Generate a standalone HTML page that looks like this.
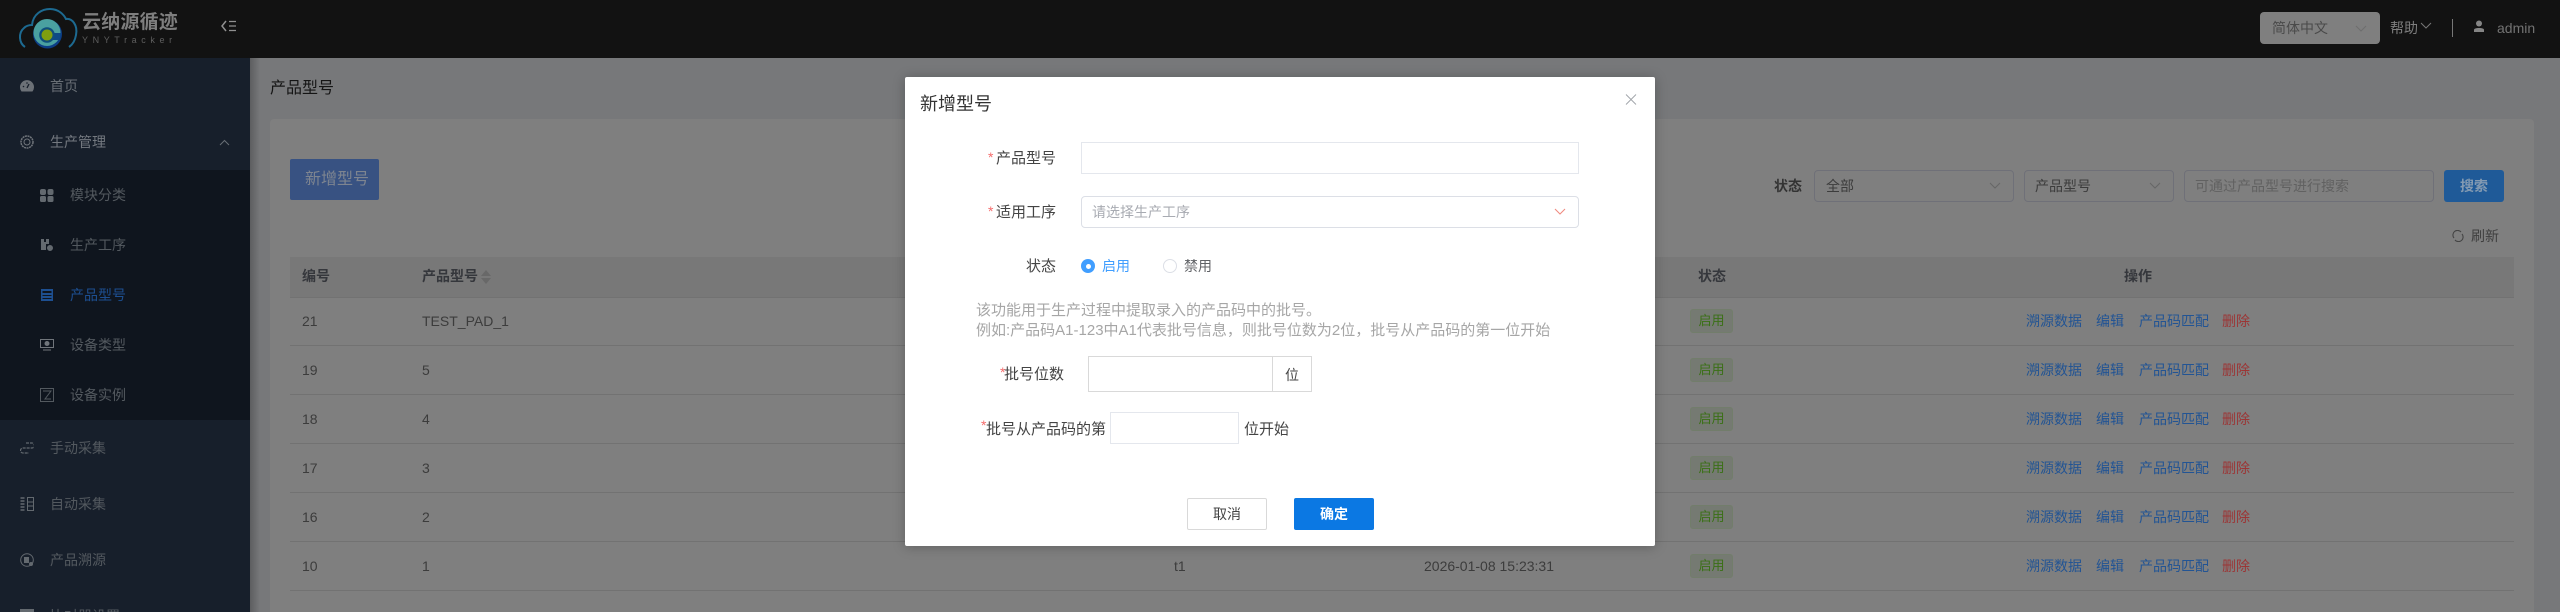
<!DOCTYPE html>
<html lang="zh-CN"><head><meta charset="utf-8"><title>产品型号</title>
<style>
html,body{margin:0;padding:0;width:2560px;height:612px;overflow:hidden;background:#77787a}
body{position:relative;font-family:"Liberation Sans","Noto Sans CJK SC",sans-serif;font-size:14px}
div,span,svg{position:absolute;box-sizing:border-box}
.t{line-height:20px;white-space:nowrap}
.m{color:#686e75}.s{color:#53595f}
.th{color:#35373c;font-weight:700;font-size:14px;top:266px}
.c{color:#3c3c3c}
.l{height:1px;left:290px;width:2224px;background:#727272}
.tag{left:1690px;width:43px;height:24px;border:1px solid #727d6b;border-radius:3px;background:#757a72;color:#3a7016;font-size:13px;line-height:22px;text-align:center}
.a{color:#225494}.d{color:#9c3535}
.box{background:#fff;border:1px solid #e4e7ed}
.sel{background:#7f7f7f;border:1px solid #6f7078;border-radius:4px;height:32px;top:170px}
.lab{color:#444;text-align:right;font-size:15px}
.f{color:#444;font-size:15px}
.req{color:#f56c6c}
</style></head><body>
<!-- header -->
<div style="left:0;top:0;width:2560px;height:58px;background:#121212"></div>
<svg style="left:18px;top:6px" width="62" height="44" viewBox="0 0 62 44"><path d="M7 41C1 37 0 27 6 22 9 19 12 19 14 19 15 8 24 3 32 3 41 3 46 9 48 13 54 12 60 19 58 29 57 35 54 39 51 41" fill="none" stroke="#1d6a91" stroke-width="2"/><circle cx="29.500" cy="28" r="14.500" fill="#0c3d86"/><circle cx="29" cy="26.500" r="13.500" fill="#4aa0a0"/><path d="M43 27H31v7H41.500" fill="#0d4a86"/><circle cx="29" cy="29" r="7.800" fill="#0f4f7d"/><circle cx="29" cy="29" r="5.500" fill="#7f9f10"/></svg>
<div class="t" style="left:82px;top:13px;color:#7e7e7e;font-size:19px;font-weight:700;letter-spacing:.2px">云纳源循迹</div>
<div class="t" style="left:82px;top:30px;color:#5e5e5e;font-size:9px;letter-spacing:4.600px">YNYTracker</div>
<svg style="left:221px;top:20px" width="16" height="12" viewBox="0 0 16 12"><path d="M5 1 1 6l4 5" fill="none" stroke="#909090" stroke-width="1.500"/><path d="M8 1.500h7M8 6h7M8 10.500h7" stroke="#909090" stroke-width="1.300"/></svg>
<div style="left:2260px;top:12px;width:120px;height:32px;background:#7f7f7f;border-radius:4px"></div>
<div class="t" style="left:2272px;top:18px;color:#4a4a4a">简体中文</div>
<svg style="left:2355px;top:25px" width="12" height="8" viewBox="0 0 12 8"><path d="M1 1l5 5 5-5" fill="none" stroke="#6e6e6e"/></svg>
<div class="t" style="left:2390px;top:18px;color:#7e7e7e">帮助</div>
<svg style="left:2420px;top:22px" width="12" height="8" viewBox="0 0 12 8"><path d="M1 1l5 5 5-5" fill="none" stroke="#777"/></svg>
<div style="left:2452px;top:19px;width:1px;height:18px;background:#777"></div>
<svg style="left:2473px;top:20px" width="12" height="13" viewBox="0 0 12 13"><circle cx="6" cy="3.500" r="3" fill="#858585"/><path d="M1 12V10C1 8.500 3 8 6 8s5 .5 5 2v2z" fill="#858585"/></svg>
<div class="t" style="left:2497px;top:18px;color:#727272;font-size:14px">admin</div>
<!-- sidebar -->
<div style="left:0;top:58px;width:250px;height:554px;background:#171f2b"></div>
<div style="left:0;top:170px;width:250px;height:250px;background:#0f151e"></div>
<div style="left:250px;top:58px;width:10px;height:554px;background:linear-gradient(90deg,#5d5e60,#77787a)"></div>
<svg style="left:20px;top:80px" width="14" height="12" viewBox="0 0 14 12"><path d="M1.500 11.500A7 7 0 1 1 12.500 11.500z" fill="#6c7177"/><path d="M7 8 9 4" stroke="#171f2b" stroke-width="1.300"/><circle cx="3.500" cy="6.500" r=".8" fill="#171f2b"/><circle cx="7" cy="3" r=".8" fill="#171f2b"/></svg>
<div class="t m" style="left:50px;top:76px">首页</div>
<svg style="left:20px;top:135px" width="14" height="14" viewBox="0 0 14 14"><circle cx="7" cy="7" r="6" fill="none" stroke="#70757b" stroke-width="1.500" stroke-dasharray="2 .6"/><circle cx="7" cy="7" r="3" fill="none" stroke="#70757b"/></svg>
<div class="t" style="left:50px;top:132px;color:#747980">生产管理</div>
<svg style="left:219px;top:139px" width="11" height="7" viewBox="0 0 11 7"><path d="M1 6l4.500-4.500L10 6" fill="none" stroke="#686e75"/></svg>
<svg style="left:40px;top:189px" width="14" height="13" viewBox="0 0 14 13"><g fill="#63696f"><rect x="0" y="0" width="6" height="6" rx="2"/><rect x="7.500" y="0" width="6" height="6" rx="2"/><rect x="0" y="7" width="6" height="6" rx="1.500"/><rect x="7.500" y="7" width="6" height="6" rx="1.500"/></g></svg>
<div class="t s" style="left:70px;top:185px">模块分类</div>
<svg style="left:40px;top:238px" width="14" height="14" viewBox="0 0 14 14"><path d="M1 1h3v3h2V1h3v5H6v6H1z" fill="#63696f"/><circle cx="10" cy="10" r="3.500" fill="#63696f" stroke="#0f151e"/></svg>
<div class="t s" style="left:70px;top:235px">生产工序</div>
<svg style="left:41px;top:289px" width="12" height="12" viewBox="0 0 12 12"><path d="M0 0h12v12H0zM1.500 2v2h9V2zM1.500 6v1h9V6zM1.500 9v1h9V9z" fill="#1d4f91" fill-rule="evenodd"/></svg>
<div class="t" style="left:70px;top:285px;color:#1d4f91">产品型号</div>
<svg style="left:40px;top:339px" width="14" height="12" viewBox="0 0 14 12"><path d="M.5.500h13v8H.5z" fill="none" stroke="#70757b"/><circle cx="7" cy="4.500" r="2.500" fill="#70757b"/><path d="M3 11h8" stroke="#70757b"/></svg>
<div class="t s" style="left:70px;top:335px">设备类型</div>
<svg style="left:40px;top:388px" width="14" height="14" viewBox="0 0 14 14"><path d="M.5.500h13v13H.5z" fill="none" stroke="#53595f"/><path d="M3 3h8L5 11h6" fill="none" stroke="#53595f"/></svg>
<div class="t s" style="left:70px;top:385px">设备实例</div>
<svg style="left:20px;top:441px" width="14" height="14" viewBox="0 0 14 14"><path d="M6 2h6a2.500 2.500 0 0 1 0 5H3a2.500 2.500 0 0 0 0 5h6" fill="none" stroke="#63696f" stroke-width="1.200" stroke-dasharray="3 1"/></svg>
<div class="t s" style="left:50px;top:438px">手动采集</div>
<svg style="left:20px;top:497px" width="14" height="14" viewBox="0 0 14 14"><path d="M.5 1h4M.5 4h4M.5 7h4M.5 10h4M.5 13h4" stroke="#63696f" stroke-width="1.500"/><path d="M7.500.500h6v13h-6zM8 5h5M8 9h5" fill="none" stroke="#63696f"/></svg>
<div class="t s" style="left:50px;top:494px">自动采集</div>
<svg style="left:20px;top:553px" width="14" height="14" viewBox="0 0 14 14"><circle cx="7" cy="7" r="6.300" fill="none" stroke="#63696f"/><rect x="4" y="4" width="5" height="6" fill="#63696f"/><circle cx="11" cy="11" r="2" fill="#63696f"/></svg>
<div class="t s" style="left:50px;top:550px">产品溯源</div>
<div style="left:20px;top:609px;width:14px;height:3px;background:#63696f"></div>
<div class="t s" style="left:50px;top:606px">比对器设置</div>
<!-- content -->
<div class="t" style="left:270px;top:79px;color:#151515;font-size:16px">产品型号</div>
<div style="left:270px;top:119px;width:2264px;height:493px;background:#7f7f7f;border-radius:4px 4px 0 0"></div>
<div style="left:290px;top:159px;width:89px;height:41px;background:#385282;border-radius:2px"></div>
<div class="t" style="left:305px;top:170px;color:#7e8590;font-size:16px">新增型号</div>
<div class="t" style="left:1774px;top:176px;color:#333;font-weight:700">状态</div>
<div class="sel" style="left:1814px;width:200px"></div><div class="t c" style="left:1826px;top:176px">全部</div>
<svg style="left:1989px;top:182px" width="12" height="8" viewBox="0 0 12 8"><path d="M1 1l5 5 5-5" fill="none" stroke="#666"/></svg>
<div class="sel" style="left:2024px;width:150px"></div><div class="t c" style="left:2035px;top:176px">产品型号</div>
<svg style="left:2149px;top:182px" width="12" height="8" viewBox="0 0 12 8"><path d="M1 1l5 5 5-5" fill="none" stroke="#666"/></svg>
<div class="sel" style="left:2184px;width:250px"></div><div class="t" style="left:2195px;top:176px;color:#616161">可通过产品型号进行搜索</div>
<div style="left:2444px;top:170px;width:60px;height:32px;background:#1f5a98;border-radius:3px"></div>
<div class="t" style="left:2460px;top:176px;color:#839ab2;font-weight:700">搜索</div>
<svg style="left:2452px;top:230px" width="12" height="12" viewBox="0 0 12 12"><path d="M2 8A4.500 4.500 0 0 1 9 2M10 4A4.500 4.500 0 0 1 3 10" fill="none" stroke="#444" stroke-width="1.100"/></svg>
<div class="t" style="left:2471px;top:226px;color:#3f3f3f">刷新</div>
<div style="left:290px;top:257px;width:2224px;height:40px;background:#787878"></div>
<div class="l" style="top:297px"></div>
<div class="t th" style="left:302px">编号</div>
<div class="t th" style="left:422px">产品型号</div>
<svg style="left:481px;top:270px" width="10" height="14" viewBox="0 0 10 14"><path d="M5 0 10 6H0zM5 14 0 8h10z" fill="#686868"/></svg>
<div class="t th" style="left:1698px">状态</div>
<div class="t th" style="left:2124px">操作</div>

<div class="l" style="top:345px"></div><div class="l" style="top:394px"></div><div class="l" style="top:443px"></div><div class="l" style="top:492px"></div><div class="l" style="top:541px"></div><div class="l" style="top:590px"></div>
<div class="t c" style="left:302px;top:311px">21</div><div class="t c" style="left:422px;top:311px">TEST_PAD_1</div>
<div class="t c" style="left:302px;top:360px">19</div><div class="t c" style="left:422px;top:360px">5</div>
<div class="t c" style="left:302px;top:409px">18</div><div class="t c" style="left:422px;top:409px">4</div>
<div class="t c" style="left:302px;top:458px">17</div><div class="t c" style="left:422px;top:458px">3</div>
<div class="t c" style="left:302px;top:507px">16</div><div class="t c" style="left:422px;top:507px">2</div>
<div class="t c" style="left:302px;top:556px">10</div><div class="t c" style="left:422px;top:556px">1</div>
<div class="t c" style="left:1174px;top:556px">t1</div><div class="t c" style="left:1424px;top:556px">2026-01-08 15:23:31</div>

<div class="tag" style="top:309px">启用</div>
<div class="t a" style="left:2026px;top:311px">溯源数据</div><div class="t a" style="left:2096px;top:311px">编辑</div><div class="t a" style="left:2139px;top:311px">产品码匹配</div><div class="t d" style="left:2222px;top:311px">删除</div>
<div class="tag" style="top:358px">启用</div>
<div class="t a" style="left:2026px;top:360px">溯源数据</div><div class="t a" style="left:2096px;top:360px">编辑</div><div class="t a" style="left:2139px;top:360px">产品码匹配</div><div class="t d" style="left:2222px;top:360px">删除</div>
<div class="tag" style="top:407px">启用</div>
<div class="t a" style="left:2026px;top:409px">溯源数据</div><div class="t a" style="left:2096px;top:409px">编辑</div><div class="t a" style="left:2139px;top:409px">产品码匹配</div><div class="t d" style="left:2222px;top:409px">删除</div>
<div class="tag" style="top:456px">启用</div>
<div class="t a" style="left:2026px;top:458px">溯源数据</div><div class="t a" style="left:2096px;top:458px">编辑</div><div class="t a" style="left:2139px;top:458px">产品码匹配</div><div class="t d" style="left:2222px;top:458px">删除</div>
<div class="tag" style="top:505px">启用</div>
<div class="t a" style="left:2026px;top:507px">溯源数据</div><div class="t a" style="left:2096px;top:507px">编辑</div><div class="t a" style="left:2139px;top:507px">产品码匹配</div><div class="t d" style="left:2222px;top:507px">删除</div>
<div class="tag" style="top:554px">启用</div>
<div class="t a" style="left:2026px;top:556px">溯源数据</div><div class="t a" style="left:2096px;top:556px">编辑</div><div class="t a" style="left:2139px;top:556px">产品码匹配</div><div class="t d" style="left:2222px;top:556px">删除</div>

<!-- modal -->
<div style="left:905px;top:77px;width:750px;height:469px;background:#fff;border-radius:2px;box-shadow:0 1px 12px rgba(0,0,0,.25)"></div>
<div class="t" style="left:920px;top:94px;color:#333;font-size:18px">新增型号</div>
<svg style="left:1625px;top:94px" width="12" height="11" viewBox="0 0 12 11"><path d="M1 .5l10 10M11 .5 1 10.500" stroke="#a0a3a8" stroke-width=".9"/></svg>

<div class="t req" style="left:988px;top:147px">*</div><div class="t lab" style="left:996px;top:149px;width:60px">产品型号</div>
<div class="box" style="left:1081px;top:142px;width:498px;height:32px"></div>
<div class="t req" style="left:988px;top:201px">*</div><div class="t lab" style="left:996px;top:203px;width:60px">适用工序</div>
<div class="box" style="left:1081px;top:196px;width:498px;height:32px;border-color:#dcdfe6;border-radius:4px"></div>
<div class="t" style="left:1092px;top:202px;color:#a8abb2">请选择生产工序</div>
<svg style="left:1554px;top:208px" width="12" height="8" viewBox="0 0 12 8"><path d="M1 1l5 5 5-5" fill="none" stroke="#f08a80" stroke-width="1.100"/></svg>
<div class="t lab" style="left:996px;top:257px;width:60px">状态</div>
<div style="left:1081px;top:259px;width:14px;height:14px;border-radius:50%;background:#409eff"></div>
<div style="left:1085.500px;top:263.500px;width:5px;height:5px;border-radius:50%;background:#fff"></div>
<div class="t" style="left:1102px;top:256px;color:#409eff">启用</div>
<div style="left:1163px;top:259px;width:14px;height:14px;border-radius:50%;background:#fff;border:1px solid #dcdfe6"></div>
<div class="t" style="left:1184px;top:256px;color:#606266">禁用</div>
<div class="t" style="left:976px;top:301px;color:#a6a6a6;font-size:15px">该功能用于生产过程中提取录入的产品码中的批号。</div>
<div class="t" style="left:976px;top:321px;color:#a6a6a6;font-size:15px">例如:产品码A1-123中A1代表批号信息，则批号位数为2位，批号从产品码的第一位开始</div>

<div class="t req" style="left:1000px;top:362px">*</div><div class="t f" style="left:1004px;top:365px">批号位数</div>
<div class="box" style="left:1088px;top:356px;width:224px;height:36px;border-color:#d9d9d9"></div>
<div style="left:1272px;top:356px;width:1px;height:36px;background:#d9d9d9"></div>
<div class="t" style="left:1285px;top:365px;color:#444">位</div>
<div class="t req" style="left:981px;top:415px">*</div><div class="t f" style="left:986px;top:420px">批号从产品码的第</div>
<div class="box" style="left:1110px;top:412px;width:129px;height:32px"></div>
<div class="t f" style="left:1244px;top:420px">位开始</div>
<div style="left:1187px;top:498px;width:80px;height:32px;background:#fff;border:1px solid #d9d9d9;border-radius:2px"></div>
<div class="t" style="left:1213px;top:504px;color:#444">取消</div>
<div style="left:1294px;top:498px;width:80px;height:32px;background:#0b78e3;border-radius:2px"></div>
<div class="t" style="left:1320px;top:504px;color:#fff;font-weight:700">确定</div>
</body></html>
